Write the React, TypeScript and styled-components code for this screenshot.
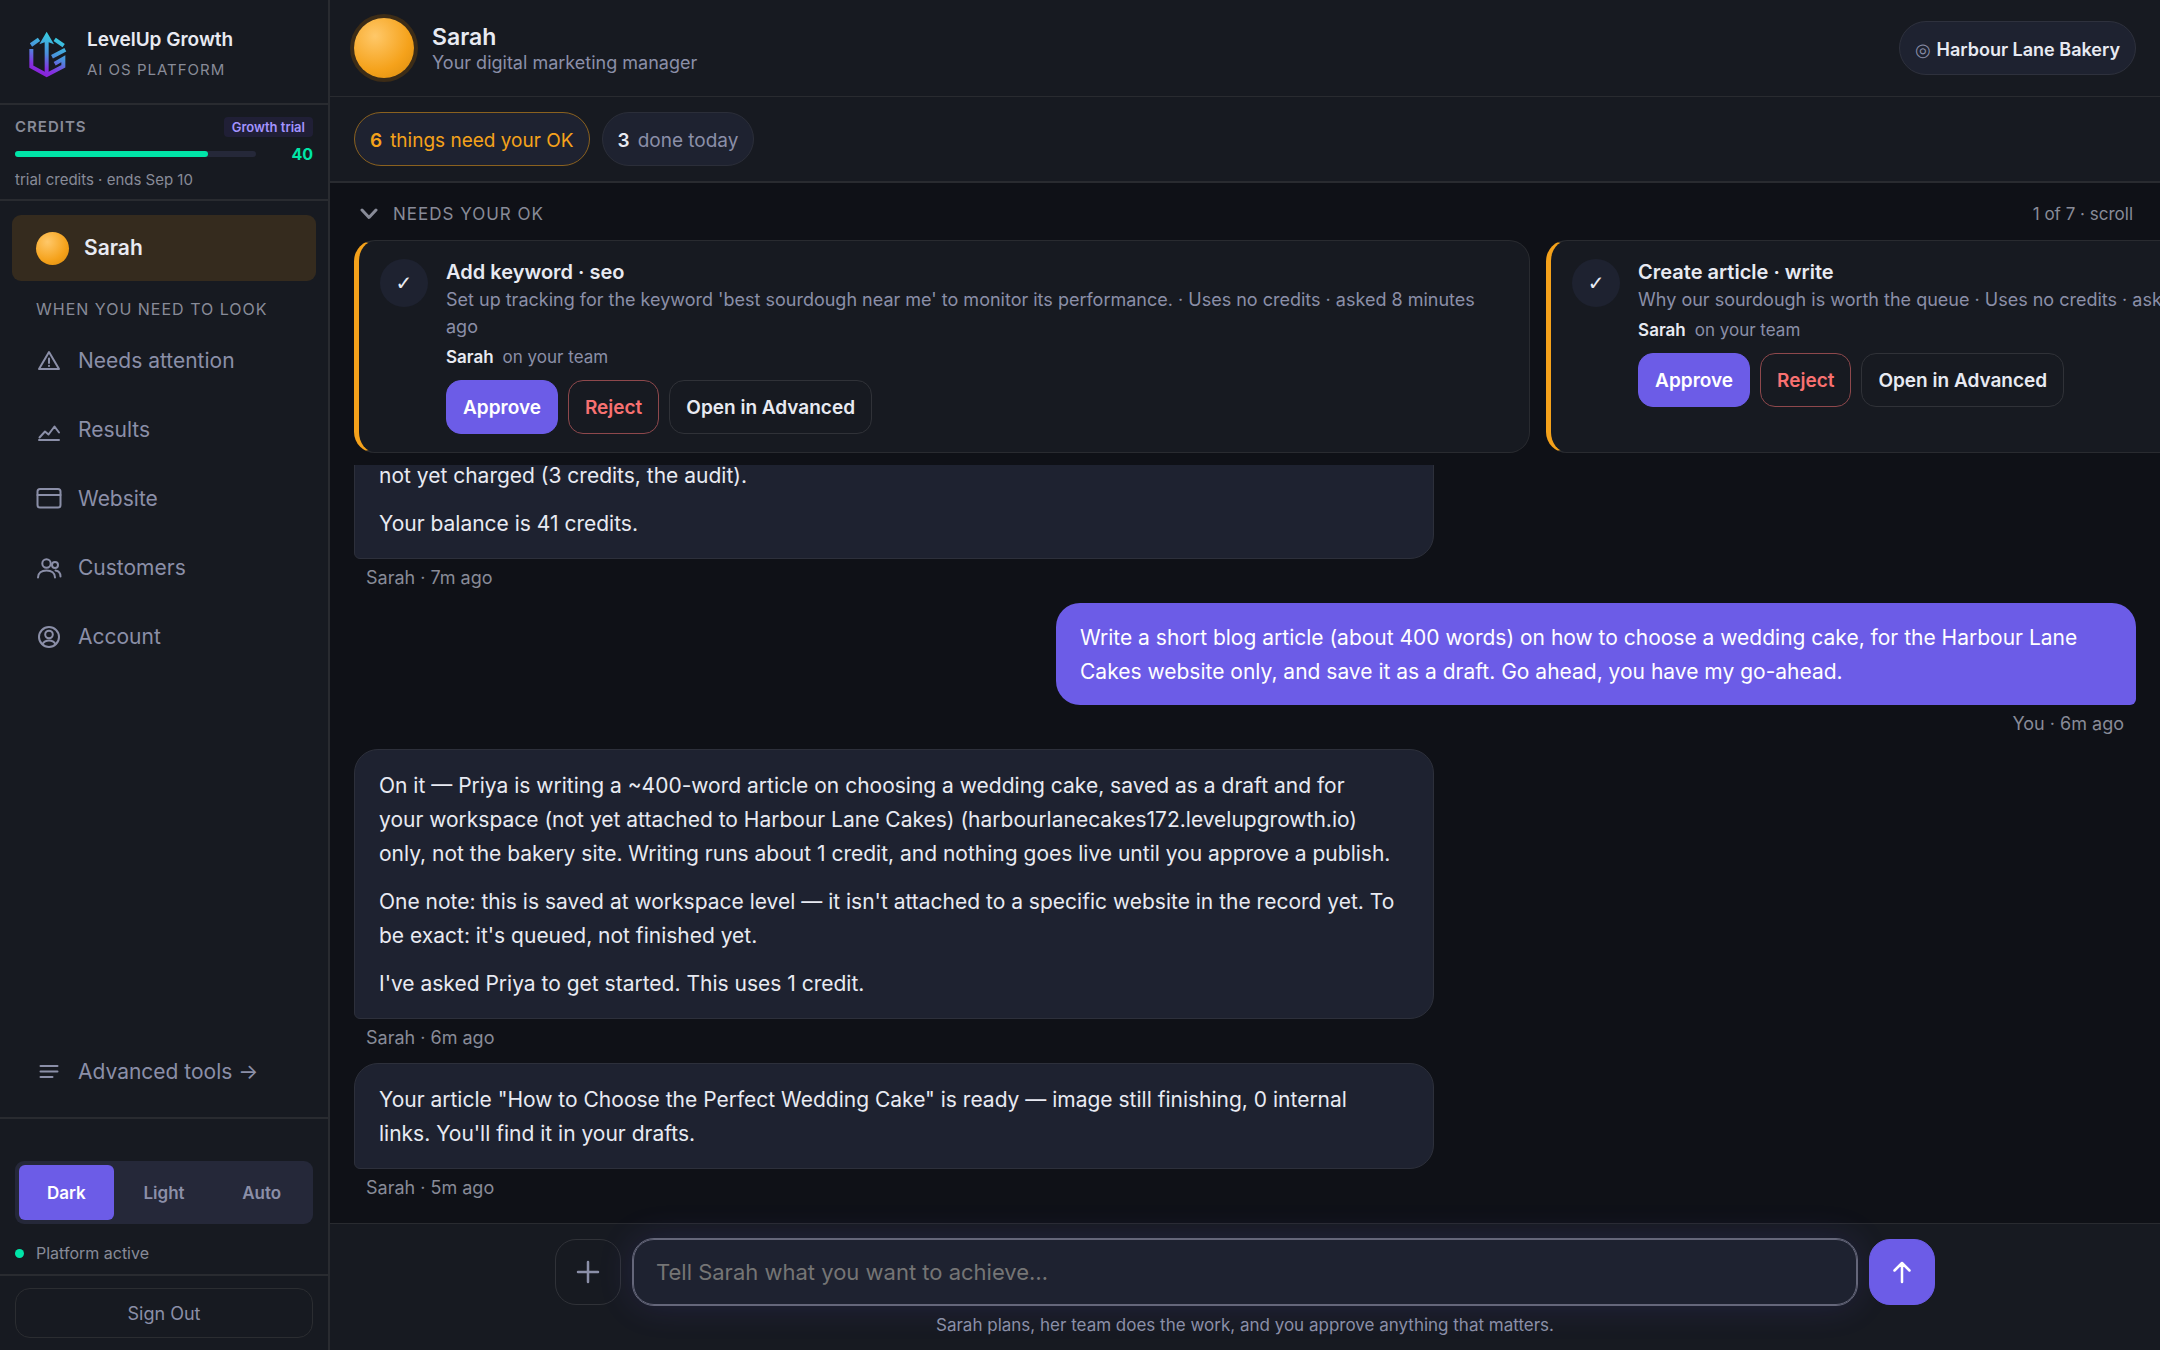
import React from "react";
import styled, { createGlobalStyle, css } from "styled-components";

const c = {
  bg: "#0f1117",
  panel: "#171a21",
  surface: "#1e2230",
  track: "#252839",
  line: "#292b30",
  text: "#e8eaf2",
  muted: "#8b8fa8",
  dim: "#888b98",
  accent: "#6c5ce7",
  amber: "#f5a21b",
  green: "#00e5a8",
  red: "#f87171",
};

const GlobalStyle = createGlobalStyle`
  *, *::before, *::after { box-sizing: border-box; }
  body {
    margin: 0;
    background: ${c.bg};
    color: ${c.text};
    font-family: Inter, "Liberation Sans", sans-serif;
    font-size: 18px;
    line-height: 24px;
  }
  button, input { font: inherit; color: inherit; }
  button { cursor: pointer; }
  p, h1, h2, h3 { margin: 0; }
`;

const Shell = styled.div`
  display: grid;
  grid-template-columns: 330px minmax(0, 1fr);
  height: 100vh;
  overflow: hidden;
`;

/* ---------- sidebar ---------- */

const Sidebar = styled.aside`
  display: flex;
  flex-direction: column;
  background: ${c.panel};
  border-right: 2px solid ${c.line};
`;

const Brand = styled.div`
  display: flex;
  align-items: center;
  gap: 20px;
  height: 105px;
  padding: 6px 28px 0;
  border-bottom: 2px solid ${c.line};
`;

const BrandName = styled.div`
  font-size: 19px;
  font-weight: 600;
  line-height: 30px;
`;

const BrandSub = styled.div`
  font-size: 15px;
  line-height: 30px;
  letter-spacing: 1px;
  color: ${c.dim};
`;

const Credits = styled.section`
  padding: 12px 15px 10px;
  border-bottom: 2px solid ${c.line};
`;

const CreditsHead = styled.div`
  display: flex;
  align-items: center;
  justify-content: space-between;
  height: 20px;
`;

const CreditsLabel = styled.h2`
  font-size: 15px;
  font-weight: 600;
  line-height: 20px;
  letter-spacing: 1px;
  color: ${c.dim};
`;

const Plan = styled.span`
  padding: 0 8px;
  border-radius: 4px;
  background: #201f36;
  color: #a393ff;
  font-size: 13px;
  font-weight: 600;
  line-height: 20px;
`;

const Meter = styled.div`
  display: flex;
  align-items: center;
  justify-content: space-between;
  height: 34px;
`;

const Track = styled.div`
  width: 241px;
  height: 6px;
  border-radius: 3px;
  background: ${c.track};
`;

const Fill = styled.div`
  height: 100%;
  border-radius: 3px;
  background: ${c.green};
`;

const Amount = styled.strong`
  font-size: 16px;
  font-weight: 700;
  color: ${c.green};
`;

const Note = styled.p`
  font-size: 15px;
  line-height: 18px;
  color: ${c.dim};
`;

const Nav = styled.nav`
  display: flex;
  flex: 1;
  flex-direction: column;
  gap: 3px;
  padding: 14px 12px 12px;
`;

const NavLink = styled.a<{ $active?: boolean }>`
  display: flex;
  align-items: center;
  gap: 16px;
  height: 66px;
  padding: 0 24px;
  border-radius: 9px;
  color: ${c.muted};
  font-size: 21px;
  text-decoration: none;
  ${(p) =>
    p.$active &&
    css`
      gap: 15px;
      background: #352b1e;
      color: ${c.text};
      font-weight: 600;
    `}
`;

const NavIcon = styled.svg`
  width: 26px;
  height: 26px;
  fill: none;
  stroke: currentColor;
  stroke-width: 2;
  stroke-linecap: round;
  stroke-linejoin: round;
`;

const NavHeading = styled.h2`
  padding: 13px 24px 4px;
  font-size: 16px;
  font-weight: 400;
  line-height: 24px;
  letter-spacing: 1px;
  color: ${c.dim};
`;

const NavSpacer = styled.div`
  flex: 1;
`;

const Orb = styled.span<{ $size: number; $ring?: boolean }>`
  flex: none;
  width: ${(p) => p.$size}px;
  height: ${(p) => p.$size}px;
  border-radius: 50%;
  background: radial-gradient(circle at 35% 30%, #ffc869, #f5a21b 60%, #d98a0c);
  ${(p) =>
    p.$ring &&
    css`
      box-shadow: 0 0 0 4px #3c2c17;
    `}
`;

const SideFoot = styled.div`
  padding: 42px 15px 9px;
  border-top: 2px solid ${c.line};
  border-bottom: 2px solid ${c.line};
`;

const ThemeSwitch = styled.div`
  display: grid;
  grid-template-columns: repeat(3, 1fr);
  gap: 3px;
  height: 63px;
  padding: 4px;
  border-radius: 9px;
  background: ${c.track};
`;

const ThemeButton = styled.button<{ $active?: boolean }>`
  border: 0;
  border-radius: 6px;
  background: ${(p) => (p.$active ? c.accent : "transparent")};
  color: ${(p) => (p.$active ? "#fff" : c.muted)};
  font-size: 17px;
  font-weight: 600;
`;

const Status = styled.p`
  display: flex;
  align-items: center;
  gap: 12px;
  margin-top: 17px;
  font-size: 16px;
  color: ${c.dim};

  &::before {
    content: "";
    width: 9px;
    height: 9px;
    border-radius: 50%;
    background: ${c.green};
  }
`;

const SignOutBar = styled.div`
  display: flex;
  padding: 12px 15px;
`;

const SignOut = styled.button`
  flex: 1;
  height: 50px;
  padding-top: 3px;
  border: 1px solid #2b2d31;
  border-radius: 15px;
  background: transparent;
  color: ${c.muted};
  font-size: 18px;
`;

/* ---------- main column ---------- */

const Main = styled.main`
  display: flex;
  flex-direction: column;
  min-width: 0;
  min-height: 0;
`;

const Header = styled.header`
  display: flex;
  align-items: center;
  gap: 18px;
  height: 97px;
  padding: 0 24px;
  background: ${c.panel};
  border-bottom: 1px solid ${c.line};
`;

const Identity = styled.div`
  flex: 1;
  padding-top: 3px;
`;

const Name = styled.h1`
  font-size: 23px;
  font-weight: 600;
  line-height: 25px;
`;

const Role = styled.p`
  font-size: 18px;
  line-height: 25px;
  color: ${c.muted};
`;

const pill = css`
  display: flex;
  align-items: center;
  gap: 8px;
  height: 54px;
  padding: 4px 15px 0;
  border: 1px solid #2e313d;
  border-radius: 27px;
  background: ${c.surface};
`;

const Workspace = styled.button`
  ${pill}
  gap: 6px;
  font-size: 18px;
  font-weight: 600;
`;

const Target = styled.span`
  color: ${c.muted};
  font-size: 18px;
  font-weight: 400;
`;

const Chips = styled.div`
  display: flex;
  gap: 12px;
  padding: 15px 24px;
  background: ${c.panel};
  border-bottom: 2px solid ${c.line};
`;

const Chip = styled.button<{ $alert?: boolean }>`
  ${pill}
  font-size: 19px;
  color: ${(p) => (p.$alert ? c.amber : c.muted)};
  border-color: ${(p) => (p.$alert ? "#8a611f" : "#2b2e39")};

  strong {
    color: ${(p) => (p.$alert ? c.amber : c.text)};
    font-weight: 600;
  }
`;

const QueueHead = styled.div`
  display: flex;
  align-items: center;
  justify-content: space-between;
  height: 57px;
  padding: 4px 27px 0 30px;
  font-size: 17px;
  color: ${c.dim};
`;

const QueueToggle = styled.button`
  display: flex;
  align-items: center;
  gap: 15px;
  padding: 0;
  border: 0;
  background: none;
  letter-spacing: 1px;
`;

const Cards = styled.div`
  display: flex;
  flex: none;
  gap: 16px;
  padding: 0 24px;
  margin-bottom: 12px;
  overflow: hidden;
`;

const Card = styled.article`
  display: flex;
  flex: 0 0 66%;
  align-items: flex-start;
  gap: 18px;
  min-height: 213px;
  padding: 18px 24px;
  padding-left: 21px;
  border: 1px solid ${c.line};
  border-left: 5px solid ${c.amber};
  border-radius: 21px;
  background: ${c.panel};
`;

const Check = styled.span`
  display: grid;
  place-items: center;
  flex: none;
  width: 48px;
  height: 48px;
  border-radius: 50%;
  background: ${c.surface};
  font-family: "DejaVu Sans", sans-serif;
  font-size: 20px;
`;

const CardBody = styled.div`
  flex: 1;
  min-width: 0;
`;

const CardTitle = styled.h3`
  font-size: 20px;
  font-weight: 600;
  line-height: 27px;
`;

const CardText = styled.p`
  line-height: 27px;
  color: ${c.muted};
`;

const Owner = styled.p`
  display: flex;
  gap: 9px;
  margin: 4px 0 10px;
  font-size: 17px;
  line-height: 26px;
  color: ${c.muted};

  strong {
    color: ${c.text};
    font-weight: 600;
  }
`;

const Actions = styled.div`
  display: flex;
  gap: 10px;
`;

const tones = {
  primary: css`
    border-color: ${c.accent};
    background: ${c.accent};
    color: #fff;
  `,
  danger: css`
    border-color: #8e484c;
    color: ${c.red};
  `,
  plain: css`
    border-color: #303238;
    color: ${c.text};
  `,
};

const Action = styled.button<{ $tone: keyof typeof tones }>`
  height: 54px;
  padding: 2px 16px 0;
  border: 1px solid;
  border-radius: 15px;
  background: transparent;
  font-size: 19px;
  font-weight: 600;
  white-space: nowrap;
  ${(p) => tones[p.$tone]}
`;

const Thread = styled.section`
  display: flex;
  flex: 1;
  flex-direction: column;
  justify-content: flex-end;
  gap: 12px;
  min-height: 0;
  padding: 0 24px 22px;
  overflow: hidden;
`;

const Message = styled.article<{ $own?: boolean }>`
  display: flex;
  flex: none;
  flex-direction: column;
  align-items: ${(p) => (p.$own ? "flex-end" : "flex-start")};
`;

const Bubble = styled.div<{ $own?: boolean }>`
  display: flex;
  flex-direction: column;
  gap: 14px;
  width: 100%;
  max-width: 1080px;
  padding: ${(p) => (p.$own ? "18px 24px 16px" : "19px 24px 17px")};
  border: ${(p) => (p.$own ? "0" : "1px solid #2d303b")};
  border-radius: ${(p) => (p.$own ? "24px 24px 6px 24px" : "24px 24px 24px 6px")};
  background: ${(p) => (p.$own ? c.accent : c.surface)};
  color: ${(p) => (p.$own ? "#fff" : c.text)};
  font-size: 21px;
  line-height: 34px;
  white-space: pre-line;
`;

const Meta = styled.p`
  padding: 6px 12px 0;
  font-size: 18px;
  line-height: 26px;
  color: ${c.dim};
`;

const Composer = styled.form`
  display: flex;
  flex: none;
  flex-direction: column;
  align-items: center;
  height: 127px;
  padding: 15px 24px 0;
  background: ${c.panel};
  border-top: 1px solid ${c.line};
`;

const ComposerRow = styled.div`
  display: flex;
  align-items: center;
  gap: 12px;
  width: 100%;
  max-width: 1380px;
`;

const Square = styled.button<{ $filled?: boolean }>`
  display: grid;
  place-items: center;
  flex: none;
  width: 66px;
  height: 66px;
  padding: 0;
  border: 1px solid ${(p) => (p.$filled ? c.accent : "#303238")};
  border-radius: 21px;
  background: ${(p) => (p.$filled ? c.accent : "transparent")};
  color: ${(p) => (p.$filled ? "#fff" : c.muted)};
`;

const Prompt = styled.input`
  flex: 1;
  min-width: 0;
  height: 66px;
  padding: 0 22px;
  border: 1px solid #65677a;
  border-radius: 21px;
  outline: 1px solid #65677a;
  background: ${c.surface};
  box-shadow: 0 0 36px rgba(108, 92, 231, 0.16);
  font-size: 22px;

  &::placeholder {
    color: #757575;
    opacity: 1;
  }
`;

const Hint = styled.p`
  margin-top: 7px;
  font-size: 17px;
  line-height: 26px;
  color: ${c.muted};
`;

const Logo = () => (
  <svg width="39" height="48" viewBox="26 32 117 144" fill="none" aria-hidden="true">
    <defs>
      <linearGradient id="brand" gradientUnits="userSpaceOnUse" x1="108" y1="50" x2="60" y2="165">
        <stop offset="0" stopColor="#38cbe0" />
        <stop offset="0.45" stopColor="#4a8fdc" />
        <stop offset="0.8" stopColor="#8430e0" />
        <stop offset="1" stopColor="#8a1fd6" />
      </linearGradient>
    </defs>
    <path d="M82 34 60 72 76 66V158L88 165V66L104 72Z" fill="url(#brand)" />
    <path
      d="M59 57 35 74M36 86V139L82 164 132 138V115L106 130M106 57 133 76M98 109 138 88"
      stroke="url(#brand)"
      strokeWidth="12"
    />
  </svg>
);

const icons: Record<string, React.ReactNode> = {
  attention: <path d="M13 4 23 21H3ZM13 10.5V15M13 17.8V18" />,
  results: <path d="M3 23H23M3.5 20.5 9 14.500 12.500 17.500 18.500 9.500 23 15.500" />,
  website: (
    <>
      <rect x="1.500" y="3" width="23" height="18.500" rx="2.500" />
      <path d="M1.500 9H24.500" />
    </>
  ),
  customers: (
    <>
      <circle cx="10.500" cy="8.500" r="4.200" />
      <circle cx="19" cy="10" r="3" />
      <path d="M2 22.500C2 18 5.500 15.500 10.500 15.500S19 18 19 22.500M19.500 15.500C22.500 16 24.500 18 24.500 21.500" />
    </>
  ),
  account: (
    <>
      <circle cx="13" cy="13" r="10" />
      <circle cx="13" cy="10.500" r="3.800" />
      <path d="M6.500 20C8 17.500 10 16.500 13 16.500S18 17.500 19.500 20" />
    </>
  ),
  tools: <path d="M4.500 7H21.500M4.500 12.500H21.500M4.500 18H16.500" />,
};

const Icon = ({ name }: { name: string }) => (
  <NavIcon viewBox="0 0 26 26" aria-hidden="true">
    {icons[name]}
  </NavIcon>
);

const links = [
  ["attention", "Needs attention"],
  ["results", "Results"],
  ["website", "Website"],
  ["customers", "Customers"],
  ["account", "Account"],
];

const approvals = [
  {
    title: "Add keyword · seo",
    text: "Set up tracking for the keyword 'best sourdough near me' to monitor its performance. · Uses no credits · asked 8 minutes ago",
  },
  {
    title: "Create article · write",
    text: "Why our sourdough is worth the queue · Uses no credits · asked 8 minutes ago",
  },
];

const messages = [
  {
    meta: "Sarah · 7m ago",
    lines: ["not yet charged (3 credits, the audit).", "Your balance is 41 credits."],
  },
  {
    meta: "You · 6m ago",
    own: true,
    lines: [
      "Write a short blog article (about 400 words) on how to choose a wedding cake, for the Harbour Lane Cakes website only, and save it as a draft. Go ahead, you have my go-ahead.",
    ],
  },
  {
    meta: "Sarah · 6m ago",
    lines: [
      "On it — Priya is writing a ~400-word article on choosing a wedding cake, saved as a draft and for\nyour workspace (not yet attached to Harbour Lane Cakes) (harbourlanecakes172.levelupgrowth.io)\nonly, not the bakery site. Writing runs about 1 credit, and nothing goes live until you approve a publish.",
      "One note: this is saved at workspace level — it isn't attached to a specific website in the record yet. To be exact: it's queued, not finished yet.",
      "I've asked Priya to get started. This uses 1 credit.",
    ],
  },
  {
    meta: "Sarah · 5m ago",
    lines: [
      'Your article "How to Choose the Perfect Wedding Cake" is ready — image still finishing, 0 internal\nlinks. You\'ll find it in your drafts.',
    ],
  },
];

export default function App() {
  return (
    <>
      <GlobalStyle />
      <Shell>
        <Sidebar>
          <Brand>
            <Logo />
            <div>
              <BrandName>LevelUp Growth</BrandName>
              <BrandSub>AI OS PLATFORM</BrandSub>
            </div>
          </Brand>
          <Credits>
            <CreditsHead>
              <CreditsLabel>CREDITS</CreditsLabel>
              <Plan>Growth trial</Plan>
            </CreditsHead>
            <Meter>
              <Track>
                <Fill style={{ width: "80%" }} />
              </Track>
              <Amount>40</Amount>
            </Meter>
            <Note>trial credits · ends Sep 10</Note>
          </Credits>
          <Nav>
            <NavLink href="#sarah" $active>
              <Orb $size={33} />
              Sarah
            </NavLink>
            <NavHeading>WHEN YOU NEED TO LOOK</NavHeading>
            {links.map(([icon, label]) => (
              <NavLink key={icon} href={`#${icon}`}>
                <Icon name={icon} />
                {label}
              </NavLink>
            ))}
            <NavSpacer />
            <NavLink href="#advanced">
              <Icon name="tools" />
              Advanced tools →
            </NavLink>
          </Nav>
          <SideFoot>
            <ThemeSwitch>
              <ThemeButton $active>Dark</ThemeButton>
              <ThemeButton>Light</ThemeButton>
              <ThemeButton>Auto</ThemeButton>
            </ThemeSwitch>
            <Status>Platform active</Status>
          </SideFoot>
          <SignOutBar>
            <SignOut>Sign Out</SignOut>
          </SignOutBar>
        </Sidebar>

        <Main>
          <Header>
            <Orb $size={60} $ring />
            <Identity>
              <Name>Sarah</Name>
              <Role>Your digital marketing manager</Role>
            </Identity>
            <Workspace>
              <Target>◎</Target>
              Harbour Lane Bakery
            </Workspace>
          </Header>
          <Chips>
            <Chip $alert>
              <strong>6</strong> things need your OK
            </Chip>
            <Chip>
              <strong>3</strong> done today
            </Chip>
          </Chips>

          <QueueHead>
            <QueueToggle>
              <svg width="18" height="12" viewBox="0 0 18 12" fill="none" aria-hidden="true">
                <path
                  d="M2 2 9 9.500 16 2"
                  stroke="currentColor"
                  strokeWidth="3"
                  strokeLinecap="round"
                  strokeLinejoin="round"
                />
              </svg>
              NEEDS YOUR OK
            </QueueToggle>
            <span>1 of 7 · scroll</span>
          </QueueHead>
          <Cards>
            {approvals.map((a) => (
              <Card key={a.title}>
                <Check>✓</Check>
                <CardBody>
                  <CardTitle>{a.title}</CardTitle>
                  <CardText>{a.text}</CardText>
                  <Owner>
                    <strong>Sarah</strong> on your team
                  </Owner>
                  <Actions>
                    <Action $tone="primary">Approve</Action>
                    <Action $tone="danger">Reject</Action>
                    <Action $tone="plain">Open in Advanced</Action>
                  </Actions>
                </CardBody>
              </Card>
            ))}
          </Cards>

          <Thread>
            {messages.map((m) => (
              <Message key={m.meta} $own={m.own}>
                <Bubble $own={m.own}>
                  {m.lines.map((line) => (
                    <p key={line}>{line}</p>
                  ))}
                </Bubble>
                <Meta>{m.meta}</Meta>
              </Message>
            ))}
          </Thread>

          <Composer onSubmit={(e) => e.preventDefault()}>
            <ComposerRow>
              <Square type="button" aria-label="Add attachment">
                <svg width="24" height="24" viewBox="0 0 24 24" fill="none" aria-hidden="true">
                  <path d="M12 2V22M2 12H22" stroke="currentColor" strokeWidth="2.500" strokeLinecap="round" />
                </svg>
              </Square>
              <Prompt aria-label="Message Sarah" placeholder="Tell Sarah what you want to achieve…" />
              <Square type="submit" $filled aria-label="Send">
                <svg width="24" height="24" viewBox="0 0 24 24" fill="none" aria-hidden="true">
                  <path
                    d="M12 22V3M4.500 10.500 12 3 19.500 10.500"
                    stroke="currentColor"
                    strokeWidth="2.500"
                    strokeLinecap="round"
                    strokeLinejoin="round"
                  />
                </svg>
              </Square>
            </ComposerRow>
            <Hint>Sarah plans, her team does the work, and you approve anything that matters.</Hint>
          </Composer>
        </Main>
      </Shell>
    </>
  );
}
